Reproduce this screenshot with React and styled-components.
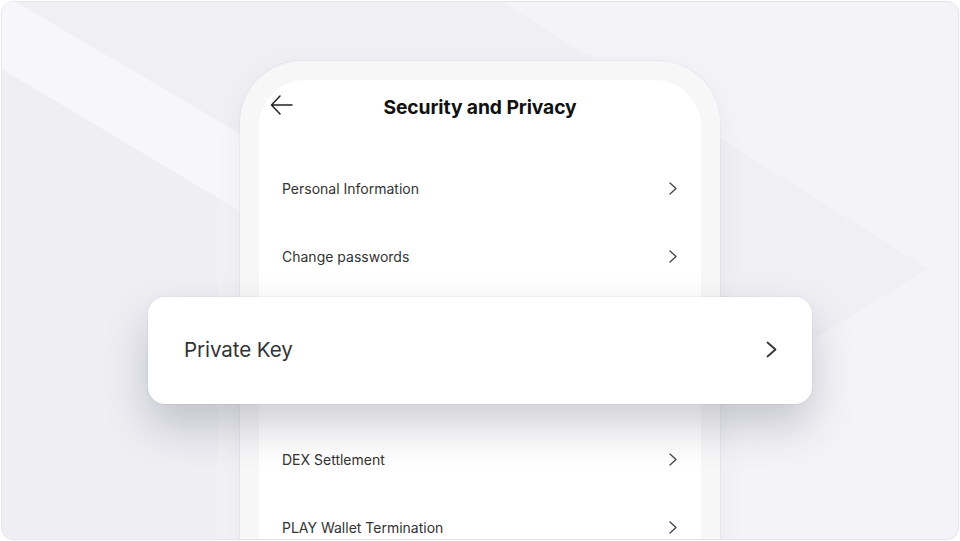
import styled, { createGlobalStyle } from "styled-components";

const GlobalStyle = createGlobalStyle`
  html, body {
    margin: 0;
    padding: 0;
    background: #ffffff;
  }
  body {
    font-family: Inter, "Noto Sans", "Liberation Sans", sans-serif;
    -webkit-font-smoothing: antialiased;
  }
`;

const rows = [
  "Personal Information",
  "Change passwords",
  "Private Key",
  "Recovery Phrase",
  "DEX Settlement",
  "PLAY Wallet Termination",
];

const Page = styled.div`
  padding: 1px;
  width: 960px;
  height: 541px;
  box-sizing: border-box;
`;

const Stage = styled.div`
  position: relative;
  height: 539px;
  box-sizing: border-box;
  border: 1px solid #e4e4ea;
  border-radius: 12px;
  overflow: hidden;
  background: #f4f4f8;
  display: flex;
  justify-content: center;
  padding-top: 59px;
`;

const Backdrop = styled.svg`
  position: absolute;
  inset: 0;
  width: 100%;
  height: 100%;
`;

const Phone = styled.div`
  position: relative;
  width: 480px;
  box-sizing: border-box;
  padding: 19px 19px 0;
  background: #f7f7f8;
  border-radius: 62px 62px 0 0;
  box-shadow: 0 0 0 1px rgba(20, 20, 40, 0.03), 0 8px 30px rgba(20, 20, 60, 0.05);
  align-self: flex-start;
  height: 600px;
`;

const Screen = styled.div`
  background: #ffffff;
  border-radius: 46px 46px 0 0;
  height: 100%;
`;

const Header = styled.div`
  position: relative;
  height: 54px;
  display: flex;
  align-items: center;
  justify-content: center;
`;

const Back = styled.svg`
  position: absolute;
  left: 11px;
  top: 14px;
`;

const Title = styled.h1`
  margin: 0;
  font-size: 19.3px;
  font-weight: 700;
  color: #111;
  letter-spacing: -0.1px;
`;

const List = styled.div`
  padding-top: 21px;
`;

const Row = styled.div`
  height: 67.7px;
  display: flex;
  align-items: center;
  justify-content: space-between;
  padding: 0 24px 0 23px;
  font-size: 14px;
  color: #333;
`;

const Floating = styled.div`
  position: absolute;
  left: 146px;
  top: 295px;
  width: 664px;
  height: 107px;
  box-sizing: border-box;
  background: #ffffff;
  border-radius: 17px;
  display: flex;
  align-items: center;
  justify-content: space-between;
  padding: 0 35px 2px 36px;
  box-shadow: 0 0 0 1px rgba(0, 0, 0, 0.03), 0 22px 44px rgba(30, 30, 50, 0.21);
`;

const FloatLabel = styled.span`
  font-size: 20.6px;
  color: #333;
  letter-spacing: -0.1px;
`;

const Chevron = ({ big }) =>
  big ? (
    <svg width="11" height="17" viewBox="0 0 11 17">
      <polyline points="1.5,1.5 9.5,8.5 1.5,15.5" fill="none" stroke="#333" strokeWidth="1.8" strokeLinecap="round" strokeLinejoin="round" />
    </svg>
  ) : (
    <svg width="8" height="13" viewBox="0 0 8 13">
      <polyline points="1,1 7,6.5 1,12" fill="none" stroke="#444" strokeWidth="1.3" strokeLinecap="round" strokeLinejoin="round" />
    </svg>
  );

export default function App() {
  return (
    <Page>
      <GlobalStyle />
      <Stage>
        <Backdrop viewBox="0 0 956 537" preserveAspectRatio="none">
          <polygon points="0,-314 926,267 0,833" fill="#efeff4" />
          <polygon points="12,-1 239,132 239,210 216,196 -1,67 -1,-1" fill="#f7f7fa" />
          <polygon points="216,196 239,210 239,540 216,540" fill="#f2f2f6" />
          <polygon points="-1,67 216,196 216,540 -1,540" fill="#eeeef3" />
        </Backdrop>
        <Phone>
          <Screen>
            <Header>
              <Back width="24" height="22" viewBox="0 0 24 22">
                <path d="M22 11H2M10 2 1.5 11 10 20" fill="none" stroke="#222" strokeWidth="1.5" strokeLinecap="round" strokeLinejoin="round" />
              </Back>
              <Title>Security and Privacy</Title>
            </Header>
            <List>
              {rows.map((r) => (
                <Row key={r}>
                  <span>{r}</span>
                  <Chevron />
                </Row>
              ))}
            </List>
          </Screen>
        </Phone>
        <Floating>
          <FloatLabel>Private Key</FloatLabel>
          <Chevron big />
        </Floating>
      </Stage>
    </Page>
  );
}
